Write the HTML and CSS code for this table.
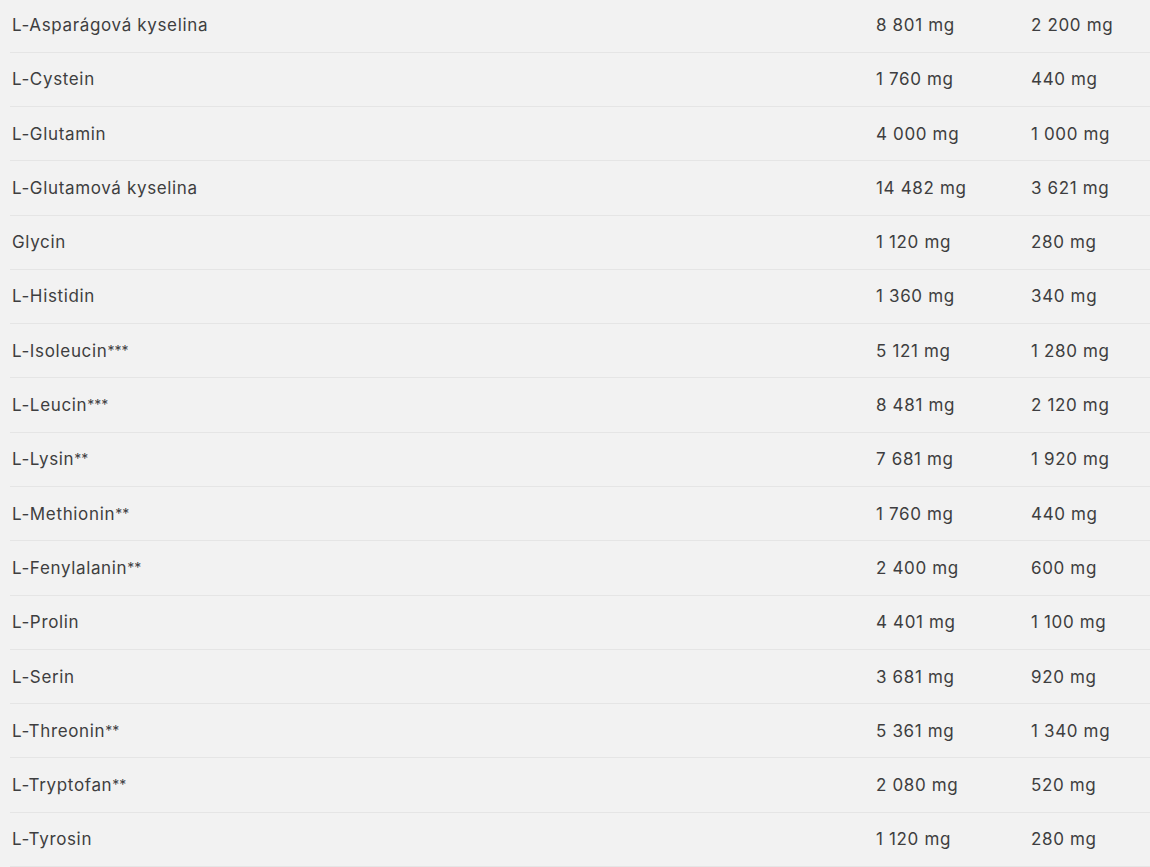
FILE: index.html
```html
<!DOCTYPE html>
<html lang="cs">
<head>
<meta charset="utf-8">
<title>Aminokyseliny</title>
<link rel="stylesheet" href="styles.css">
</head>
<body>
<div class="table">
  <div class="row"><div class="name">L-Asparágová kyselina</div><div class="val">8 801 mg</div><div class="val">2 200 mg</div></div>
  <div class="row"><div class="name">L-Cystein</div><div class="val">1 760 mg</div><div class="val">440 mg</div></div>
  <div class="row"><div class="name">L-Glutamin</div><div class="val">4 000 mg</div><div class="val">1 000 mg</div></div>
  <div class="row"><div class="name">L-Glutamová kyselina</div><div class="val">14 482 mg</div><div class="val">3 621 mg</div></div>
  <div class="row"><div class="name">Glycin</div><div class="val">1 120 mg</div><div class="val">280 mg</div></div>
  <div class="row"><div class="name">L-Histidin</div><div class="val">1 360 mg</div><div class="val">340 mg</div></div>
  <div class="row"><div class="name">L-Isoleucin<span class="mark">***</span></div><div class="val">5 121 mg</div><div class="val">1 280 mg</div></div>
  <div class="row"><div class="name">L-Leucin<span class="mark">***</span></div><div class="val">8 481 mg</div><div class="val">2 120 mg</div></div>
  <div class="row"><div class="name">L-Lysin<span class="mark">**</span></div><div class="val">7 681 mg</div><div class="val">1 920 mg</div></div>
  <div class="row"><div class="name">L-Methionin<span class="mark">**</span></div><div class="val">1 760 mg</div><div class="val">440 mg</div></div>
  <div class="row"><div class="name">L-Fenylalanin<span class="mark">**</span></div><div class="val">2 400 mg</div><div class="val">600 mg</div></div>
  <div class="row"><div class="name">L-Prolin</div><div class="val">4 401 mg</div><div class="val">1 100 mg</div></div>
  <div class="row"><div class="name">L-Serin</div><div class="val">3 681 mg</div><div class="val">920 mg</div></div>
  <div class="row"><div class="name">L-Threonin<span class="mark">**</span></div><div class="val">5 361 mg</div><div class="val">1 340 mg</div></div>
  <div class="row"><div class="name">L-Tryptofan<span class="mark">**</span></div><div class="val">2 080 mg</div><div class="val">520 mg</div></div>
  <div class="row"><div class="name">L-Tyrosin</div><div class="val">1 120 mg</div><div class="val">280 mg</div></div>
</div>
</body>
</html>
```
FILE: styles.css
```css
html, body {
  margin: 0;
  padding: 0;
  background: #f2f2f2;
}
body {
  font-family: Inter, "Open Sans", "Liberation Sans", sans-serif;
  font-size: 17px;
  letter-spacing: 0.65px;
  color: #3e3e40;
  overflow: hidden;
}
.table {
  margin-top: -1.7px;
  margin-left: 10px;
}
.row {
  display: grid;
  grid-template-columns: 866px 155px 1fr;
  height: 54.3px;
  align-items: center;
  border-bottom: 1px solid #e5e5e5;
  box-sizing: border-box;
}
.name {
  padding-left: 2px;
  white-space: nowrap;
}
.mark {
  font-size: 14px;
  letter-spacing: 0;
  vertical-align: 1px;
}
.val {
  white-space: nowrap;
}
```
